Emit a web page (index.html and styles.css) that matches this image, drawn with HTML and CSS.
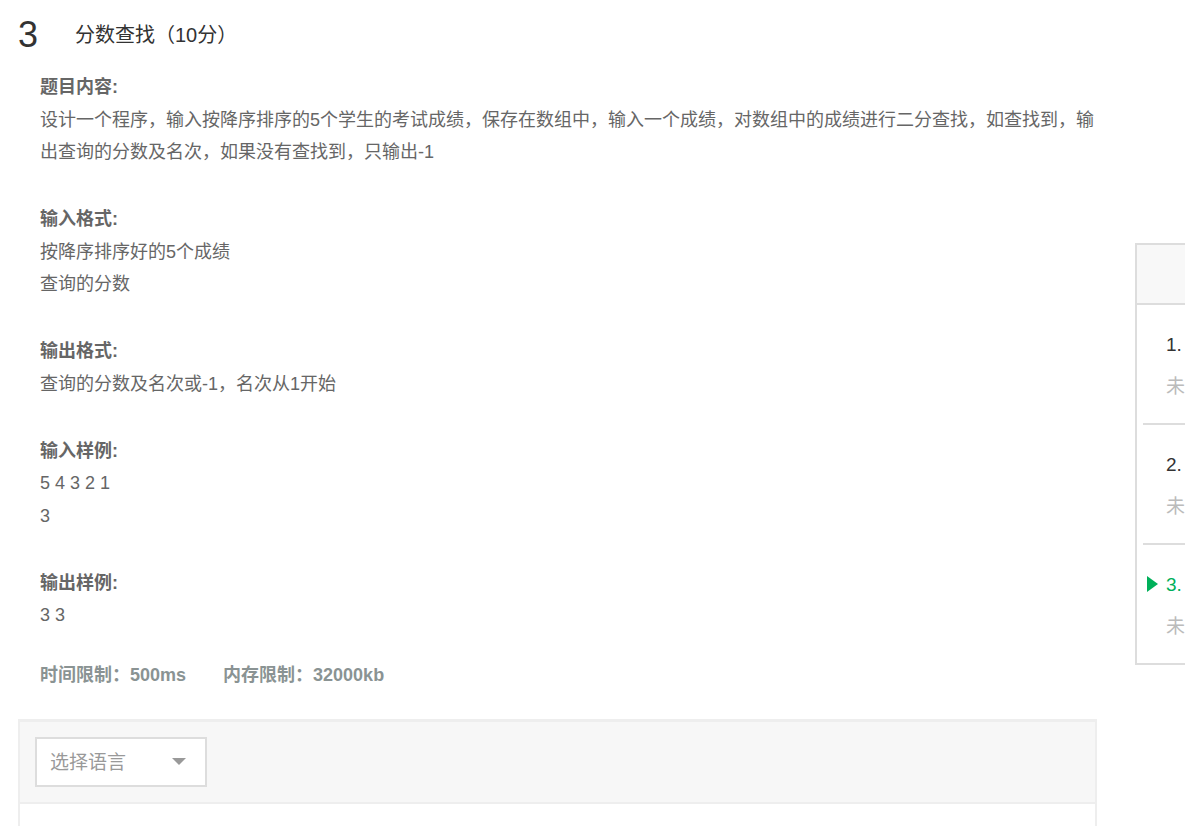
FILE: index.html
```html
<!DOCTYPE html>
<html lang="zh-CN">
<head>
  <meta charset="UTF-8" />
  <title>分数查找</title>
  <link rel="stylesheet" href="styles.css">
</head>
<body>
  <div class="page">
    <!-- Problem body -->
    <div class="main">
      <h2 class="title">
        <span class="num">3</span>
        <span class="name">分数查找（10分）</span>
      </h2>

      <div class="desc">
        <div class="section">
          <div class="heading">题目内容:</div>
          <p>设计一个程序，输入按降序排序的5个学生的考试成绩，保存在数组中，输入一个成绩，对数组中的成绩进行二分查找，如查找到，输出查询的分数及名次，如果没有查找到，只输出-1</p>
        </div>
        <div class="section">
          <div class="heading">输入格式:</div>
          <p>按降序排序好的5个成绩<br>查询的分数</p>
        </div>
        <div class="section">
          <div class="heading">输出格式:</div>
          <p>查询的分数及名次或-1，名次从1开始</p>
        </div>
        <div class="section">
          <div class="heading">输入样例:</div>
          <p>5 4 3 2 1<br>3</p>
        </div>
        <div class="section">
          <div class="heading">输出样例:</div>
          <p>3 3</p>
        </div>
      </div>

      <div class="limits">
        <span>时间限制：500ms</span>
        <span>内存限制：32000kb</span>
      </div>

      <!-- Code editor -->
      <div class="editor">
        <div class="toolbar">
          <div class="lang-select">
            <span>选择语言</span>
            <i class="caret"></i>
          </div>
        </div>
        <div class="code"></div>
      </div>
    </div>

    <!-- Question list -->
    <aside class="nav">
      <div class="nav-head"></div>
      <div class="nav-item">
        <div class="nav-num">1.</div>
        <div class="nav-state">未</div>
      </div>
      <div class="nav-item">
        <div class="nav-num">2.</div>
        <div class="nav-state">未</div>
      </div>
      <div class="nav-item current">
        <div class="nav-num">3.</div>
        <div class="nav-state">未</div>
      </div>
    </aside>
  </div>
</body>
</html>
```

FILE: styles.css
```css
:root {
  --text: #666;
  --dark: #333;
  --line: #eee;
  --nav-line: #ddd;
  --green: #00b05a;
}

* { box-sizing: border-box; margin: 0; padding: 0; }

body {
  font-family: "Liberation Sans", "Noto Sans CJK SC", sans-serif;
  color: var(--text);
  background: #fff;
  overflow: hidden;
}

.page {
  display: flex;
  align-items: flex-start;
  gap: 38px;
  padding-left: 18px;
}

/* Problem body */
.main {
  width: 1079px;
  flex-shrink: 0;
}

.title {
  display: flex;
  align-items: center;
  height: 71px;
  padding-bottom: 1px;
  font-weight: normal;
  color: var(--dark);
}
.title .num {
  font-size: 36px;
  width: 57px;
}
.title .name {
  font-size: 20px;
  margin-bottom: 3px;
}

.desc {
  padding-left: 22px;
  font-size: 18px;
  line-height: 32.5px;
}
.section { margin-bottom: 34.5px; }
.section:last-child { margin-bottom: 0; }
.heading { font-weight: bold; }

.limits {
  margin-top: 27px;
  padding-left: 22px;
  font-size: 18px;
  line-height: 33px;
  font-weight: bold;
  color: #8a9393;
  display: flex;
  gap: 37px;
}

/* Editor */
.editor {
  margin-top: 27px;
  border: 2px solid var(--line);
  border-top-width: 3px;
}
.toolbar {
  background: #f7f7f7;
  padding: 15px 15px 15px;
  border-bottom: 2px solid var(--line);
}
.lang-select {
  width: 172px;
  height: 50px;
  background: #fff;
  border: 2px solid #ddd;
  display: flex;
  align-items: center;
  justify-content: space-between;
  padding: 0 19px 3px 13px;
  font-size: 19px;
  color: #999;
}
.caret {
  width: 0;
  height: 0;
  border-left: 7px solid transparent;
  border-right: 7px solid transparent;
  border-top: 7px solid #999;
  margin-top: 3px;
}
.code {
  height: 200px;
  background: #fff;
}

/* Question list */
.nav {
  margin-top: 243px;
  width: 220px;
  flex-shrink: 0;
  border: 2px solid var(--nav-line);
  border-right: none;
}
.nav-head {
  height: 60px;
  background: #f8f8f8;
  border-bottom: 2px solid var(--nav-line);
}
.nav-item {
  position: relative;
  height: 120px;
  padding: 19px 0 0 29px;
  font-size: 19px;
  line-height: 42px;
}
.nav-item + .nav-item::before {
  content: "";
  position: absolute;
  top: -2px;
  left: 6px;
  right: 0;
  height: 2px;
  background: var(--nav-line);
}
.nav-item:last-child { height: 118px; }
.nav-num { color: var(--dark); }
.nav-state { color: #bbb; }

.nav-item.current .nav-num { color: var(--green); }
.nav-item.current::after {
  content: "";
  position: absolute;
  left: 10px;
  top: 31px;
  border-top: 8.5px solid transparent;
  border-bottom: 8.5px solid transparent;
  border-left: 11px solid var(--green);
}
```
